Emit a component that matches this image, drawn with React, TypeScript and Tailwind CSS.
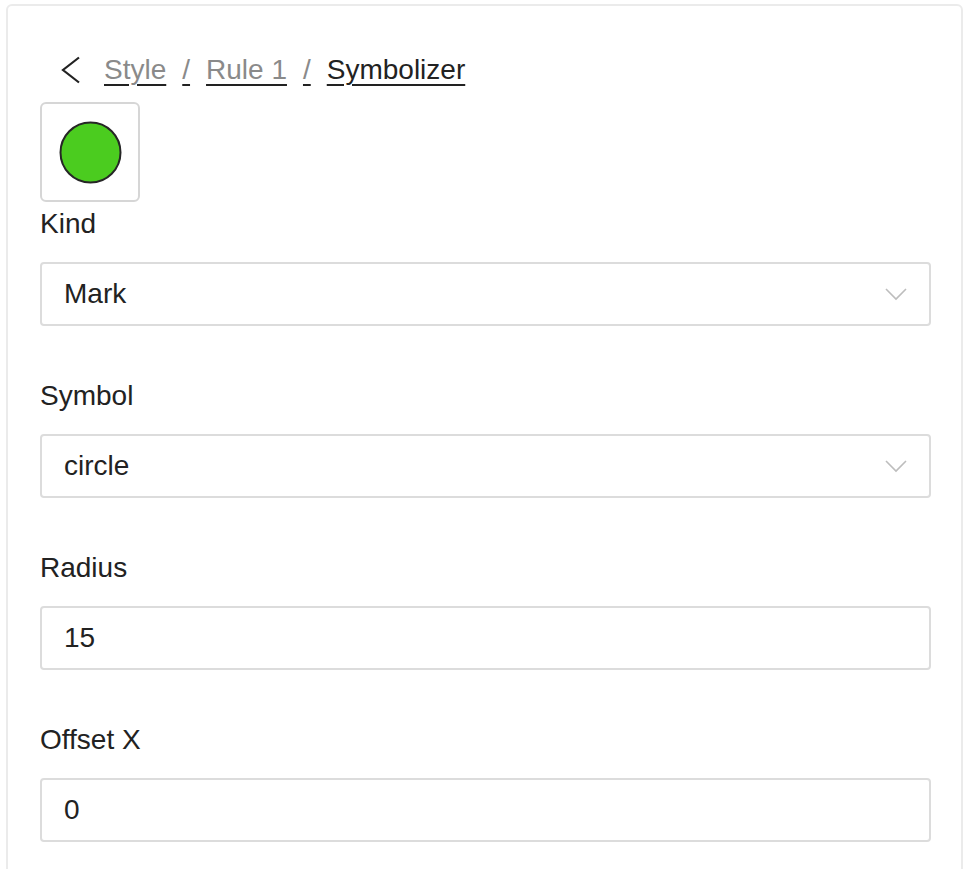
import React from 'react';

const fields: { label: string; value: string; select?: boolean }[] = [
  { label: 'Kind', value: 'Mark', select: true },
  { label: 'Symbol', value: 'circle', select: true },
  { label: 'Radius', value: '15' },
  { label: 'Offset X', value: '0' },
];

function ChevronDown() {
  return (
    <svg width="22" height="14" viewBox="0 0 22 14" fill="none" stroke="#bdbdbd" strokeWidth="1.6">
      <polyline points="1,2 11,12 21,2" />
    </svg>
  );
}

export default function App() {
  return (
    <div className="min-h-screen bg-white text-[#222] font-['Liberation_Sans',Arial,sans-serif]">
      <div className="ml-[6px] mt-[4px] w-[957px] border-2 border-[#ebebeb] rounded-md pl-8 pr-[30px] pt-[43px] pb-16">
        {/* Breadcrumb */}
        <div className="flex items-center h-[42px] pl-[21px] text-[28px] leading-[42px]">
          <svg width="20" height="28" viewBox="0 0 20 28" fill="none" stroke="#222" strokeWidth="2.2" className="mr-[23px]">
            <polyline points="18,1.5 2,14 18,26.5" />
          </svg>
          <div className="flex items-center gap-4">
            <span className="text-[#8a8a8a] underline decoration-[#222] underline-offset-[5px] decoration-2">Style</span>
            <span className="text-[#8a8a8a] underline decoration-[#222] underline-offset-[5px] decoration-2">/</span>
            <span className="text-[#8a8a8a] underline decoration-[#222] underline-offset-[5px] decoration-2">Rule 1</span>
            <span className="text-[#8a8a8a] underline decoration-[#222] underline-offset-[5px] decoration-2">/</span>
            <span className="text-[#222] underline decoration-[#222] underline-offset-[5px] decoration-2">Symbolizer</span>
          </div>
        </div>

        {/* Preview swatch */}
        <div className="mt-[11px] w-[100px] h-[100px] border-2 border-[#d6d6d6] rounded-md flex items-center justify-center">
          <svg width="66" height="66" viewBox="0 0 66 66">
            <circle cx="33.5" cy="33.5" r="30" fill="#4bcc1f" stroke="#262626" strokeWidth="2" />
          </svg>
        </div>

        {/* Form */}
        <div className="mt-px flex flex-col gap-[49px]">
          {fields.map((f) => (
            <div key={f.label} className="flex flex-col">
              <label className="text-[28px] leading-[42px]">{f.label}</label>
              <div className="mt-[17px] h-16 border-2 border-[#dcdcdc] rounded flex items-center justify-between pl-[22px] pr-[22px] text-[28px]">
                <span>{f.value}</span>
                {f.select && <ChevronDown />}
              </div>
            </div>
          ))}
        </div>
      </div>
    </div>
  );
}
